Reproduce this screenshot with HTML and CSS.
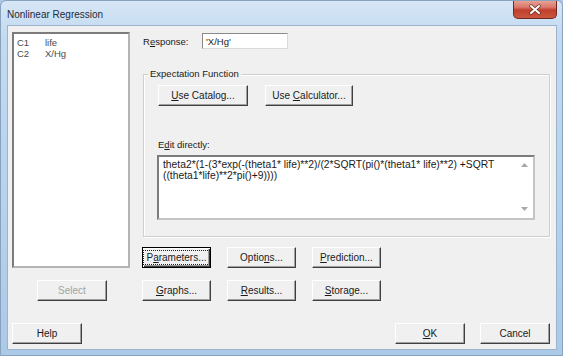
FILE: index.html
```html
<!DOCTYPE html>
<html lang="en">
<head>
    <meta charset="UTF-8">
    <meta name="viewport" content="width=device-width, initial-scale=1.0">
    <title>Nonlinear Regression</title>
    <link rel="stylesheet" href="styles.css">
</head>
<body>
    <div class="window">
        <div class="titlebar">
            <span class="title">Nonlinear Regression</span>
            <button class="close" title="Close">
                <svg width="14" height="11" viewBox="0 0 14 11">
                    <path d="M3 2 L11 9 M11 2 L3 9" stroke="#6b2a22" stroke-width="3.4" stroke-linecap="round"/>
                    <path d="M3 2 L11 9 M11 2 L3 9" stroke="#ffffff" stroke-width="2" stroke-linecap="round"/>
                </svg>
            </button>
        </div>

        <div class="client">
            <div class="main">
                <!-- variables list -->
                <div class="left-col">
                    <div class="listbox">
                        <div class="list-row"><span class="col-id">C1</span><span>life</span></div>
                        <div class="list-row"><span class="col-id">C2</span><span>X/Hg</span></div>
                    </div>
                    <button class="btn btn-select" disabled>Select</button>
                </div>

                <div class="right-col">
                    <div class="response-row">
                        <span class="label">R<u>e</u>sponse:</span>
                        <div class="field">'X/Hg'</div>
                    </div>

                    <div class="group">
                        <span class="group-title">Expectation Function</span>
                        <div class="group-buttons">
                            <button class="btn btn-catalog"><u>U</u>se Catalog...</button>
                            <button class="btn btn-calc">Use <u>C</u>alculator...</button>
                        </div>
                        <div class="edit-label">E<u>d</u>it directly:</div>
                        <div class="editor">
                            <div class="editor-text">theta2*(1-(3*exp(-(theta1* life)**2)/(2*SQRT(pi()*(theta1* life)**2) +SQRT<br>((theta1*life)**2*pi()+9))))</div>
                            <div class="scrollbar">
                                <svg width="7" height="4" viewBox="0 0 7 4"><polygon points="0,4 7,4 3.5,0" fill="#a8a8a8"/></svg>
                                <svg width="7" height="4" viewBox="0 0 7 4"><polygon points="0,0 7,0 3.5,4" fill="#a8a8a8"/></svg>
                            </div>
                        </div>
                    </div>

                    <div class="btn-grid">
                        <button class="btn btn-default"><span class="focus">P<u>a</u>rameters...</span></button>
                        <button class="btn">Optio<u>n</u>s...</button>
                        <button class="btn"><u>P</u>rediction...</button>
                        <button class="btn"><u>G</u>raphs...</button>
                        <button class="btn"><u>R</u>esults...</button>
                        <button class="btn"><u>S</u>torage...</button>
                    </div>
                </div>
            </div>

            <div class="footer">
                <button class="btn">Help</button>
                <div class="footer-right">
                    <button class="btn"><u>O</u>K</button>
                    <button class="btn">Cancel</button>
                </div>
            </div>
        </div>
    </div>
</body>
</html>
```

FILE: styles.css
```css
body {
    margin: 0;
    padding: 0;
    font-family: "Liberation Sans", Arial, sans-serif;
    font-size: 9.5px;
    color: #1a1a1a;
    background-color: #a9c8e8;
}

.window {
    width: 563px;
    height: 356px;
    box-sizing: border-box;
    border: 1px solid #8aa3bd;
    border-radius: 6px 6px 0 0;
    background: linear-gradient(180deg, #d6e6f6 0%, #c3daf1 10%, #b6d1ed 60%, #abc9e8 100%);
    overflow: hidden;
}

.titlebar {
    height: 24px;
    display: flex;
    align-items: flex-start;
}

.title {
    margin: 8px 0 0 6px;
    font-size: 10px;
    color: #1e2a36;
}

.close {
    margin-left: auto;
    margin-right: 5px;
    margin-top: -1px;
    width: 44px;
    height: 19px;
    padding: 0;
    border: 1px solid #6f2a22;
    border-top: none;
    border-radius: 0 0 5px 5px;
    background: linear-gradient(180deg, #e9a89a 0%, #d9796a 40%, #c0402e 55%, #c9563f 100%);
    display: flex;
    align-items: center;
    justify-content: center;
}

.client {
    margin-left: 6px;
    width: 550px;
    height: 325px;
    box-sizing: border-box;
    border: 1px solid #9db3cb;
    background-color: #f0f0f0;
}

.main {
    display: flex;
    padding: 6px 0 0 4px;
}

.left-col {
    width: 118px;
    display: flex;
    flex-direction: column;
}

.listbox {
    height: 236px;
    box-sizing: border-box;
    border: 2px solid;
    border-color: #7c7c7c #b4b4b4 #b4b4b4 #7c7c7c;
    background-color: #fff;
    padding: 3px 0 0 3px;
    color: #4a4a4a;
}

.list-row {
    display: flex;
    height: 11px;
    line-height: 11px;
}

.col-id {
    width: 28px;
}

.btn {
    font-family: inherit;
    font-size: 10px;
    color: #1a1a1a;
    height: 21px;
    padding: 0;
    box-sizing: border-box;
    text-align: center;
    white-space: nowrap;
    background-color: #f0f0f0;
    border: 1px solid;
    border-color: #ffffff #404040 #404040 #ffffff;
    box-shadow: inset -1px -1px 0 #a0a0a0;
}

.btn u {
    text-underline-offset: 1px;
}

.btn-select {
    width: 70px;
    margin: 12px 0 0 25px;
    color: #a3a3a3;
}

.right-col {
    width: 407px;
    margin-left: 13px;
    display: flex;
    flex-direction: column;
}

.response-row {
    display: flex;
    align-items: center;
    height: 16px;
    margin-top: 1px;
}

.label {
    width: 59px;
}

.field {
    width: 86px;
    height: 16px;
    box-sizing: border-box;
    border: 1px solid;
    border-color: #8a8a8a #dadada #dadada #8a8a8a;
    background-color: #fff;
    padding: 2px 0 0 3px;
    line-height: 11px;
}

.group {
    margin-top: 25px;
    height: 163px;
    box-sizing: border-box;
    border: 1px solid #cfcfcf;
    box-shadow: inset 1px 1px 0 #fff, 1px 1px 0 #fff;
    padding: 0 0 0 13px;
}

.group-title {
    display: table;
    margin: -7px 0 0 -9px;
    padding: 0 2px;
    line-height: 11px;
    background-color: #f0f0f0;
}

.group-buttons {
    display: flex;
    gap: 17px;
    margin: 6px 0 0 1px;
}

.btn-catalog {
    width: 90px;
}

.btn-calc {
    width: 88px;
}

.edit-label {
    margin: 33px 0 0 1px;
    line-height: 11px;
}

.editor {
    margin-top: 5px;
    width: 378px;
    height: 65px;
    box-sizing: border-box;
    border: 2px solid;
    border-color: #7c7c7c #c4c4c4 #c4c4c4 #7c7c7c;
    background-color: #fff;
    display: flex;
}

.editor-text {
    flex: 1;
    padding: 3px 0 0 4px;
    font-size: 10.3px;
    line-height: 10.5px;
    white-space: nowrap;
}

.scrollbar {
    width: 17px;
    display: flex;
    flex-direction: column;
    justify-content: space-between;
    align-items: center;
    padding: 6px 0 7px;
    background-color: #fff;
}

.btn-grid {
    display: grid;
    grid-template-columns: repeat(3, 69px);
    column-gap: 16px;
    row-gap: 12px;
    margin: 10px 0 0 -1px;
}

.btn-default {
    border: 1px solid #000;
    box-shadow: inset 1px 1px 0 #fff, inset -1px -1px 0 #404040, inset -2px -2px 0 #a0a0a0;
}

.focus {
    border: 1px dotted #222;
    padding: 1px 2px;
    line-height: 11px;
}

.footer {
    display: flex;
    margin-top: 22px;
    padding: 0 6px 0 4px;
}

.footer .btn {
    width: 70px;
}

.footer-right {
    margin-left: auto;
    display: flex;
    gap: 15px;
}
```
